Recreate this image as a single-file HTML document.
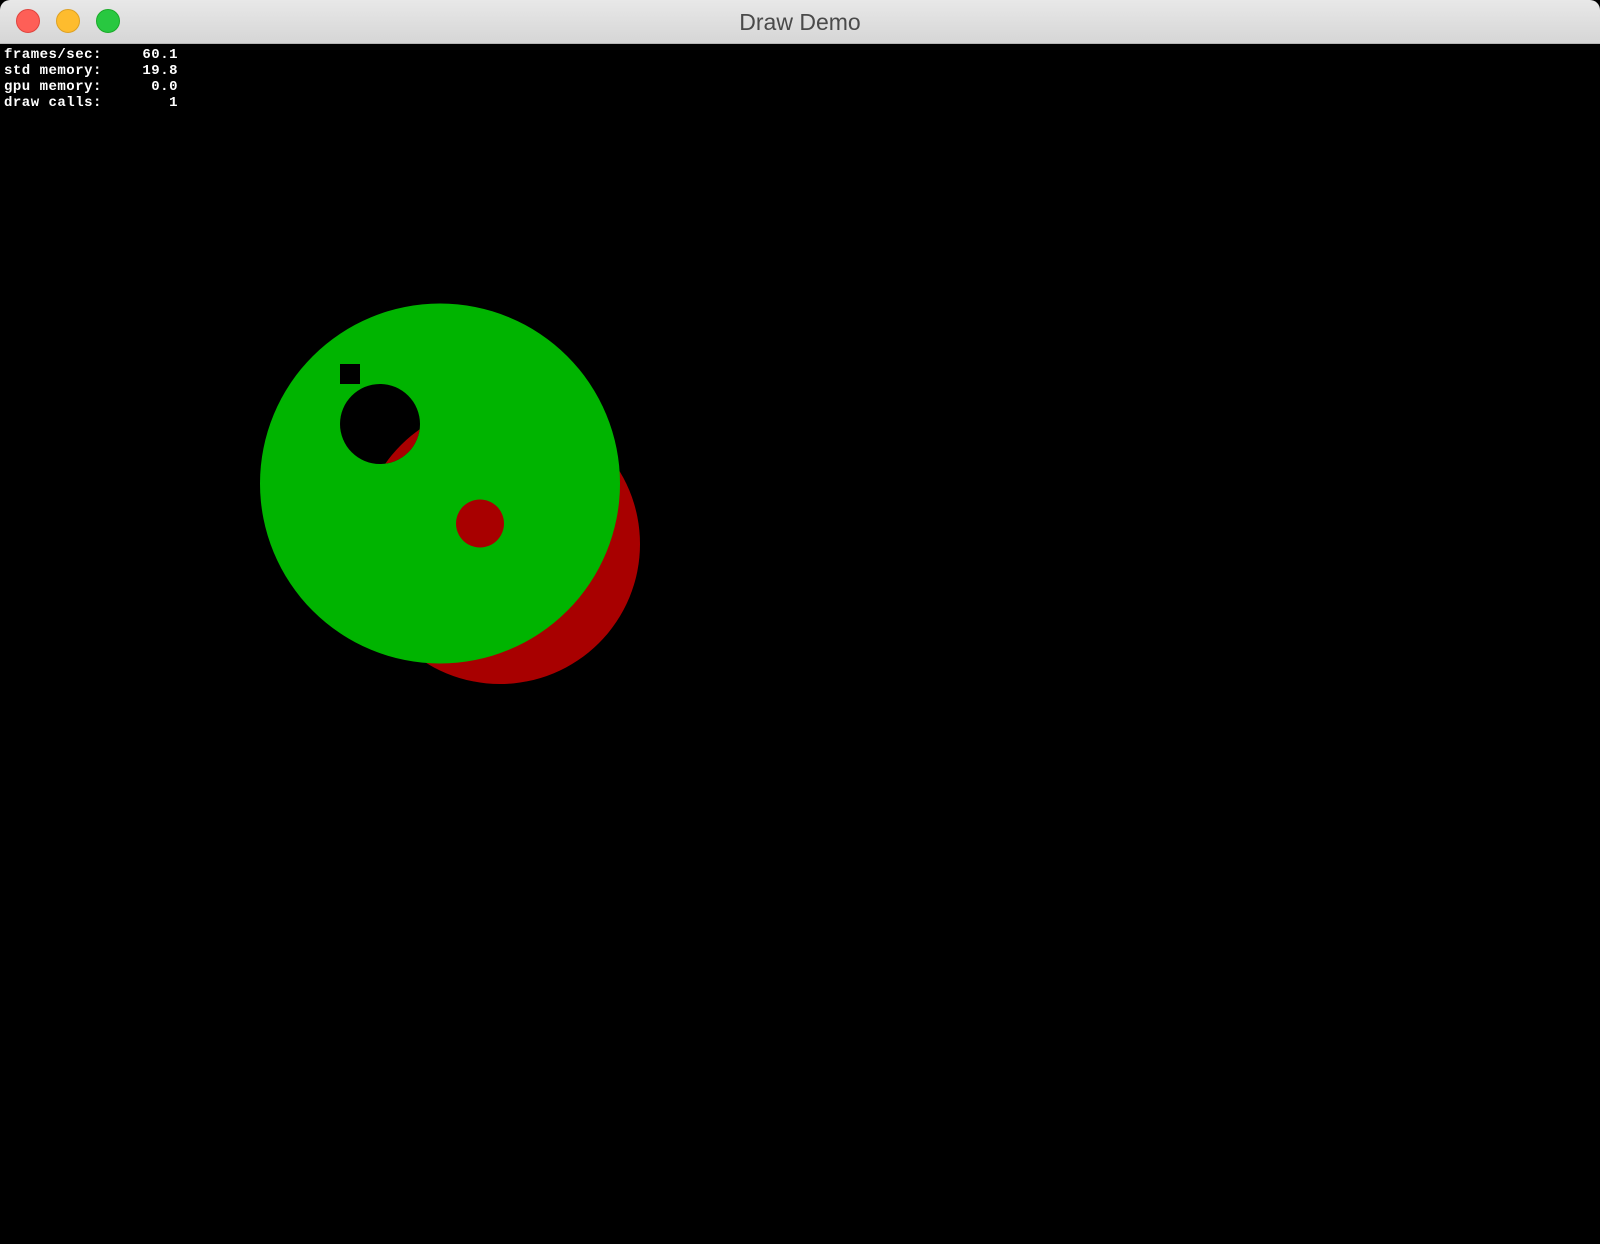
<!DOCTYPE html>
<html><head><meta charset="utf-8"><style>
html,body{margin:0;padding:0;width:1600px;height:1244px;overflow:hidden;background:#000;}
.bar{position:absolute;left:0;top:0;width:1600px;height:43px;background:linear-gradient(#e8e8e8,#d6d6d6);border-bottom:1px solid #b8b8b8;border-radius:10px 10px 0 0;}
.btn{position:absolute;top:9px;width:24px;height:24px;border-radius:50%;box-sizing:border-box;}
.title{position:absolute;left:0;width:1600px;top:9px;text-align:center;font:23px "Liberation Sans",sans-serif;color:#4a4a4a;}
.stats{position:absolute;left:4px;top:47px;font:bold 14px/16px "Liberation Mono",monospace;color:#fff;letter-spacing:0.5px;}
.row{position:relative;width:174px;height:16px;}
.row span{position:absolute;right:0;top:0;}
svg{position:absolute;left:0;top:0;}
</style></head><body>
<div class="bar">
<div class="btn" style="left:16px;background:#fe5f57;border:1px solid #e0443e"></div>
<div class="btn" style="left:56px;background:#febc2e;border:1px solid #dea123"></div>
<div class="btn" style="left:96px;background:#28c840;border:1px solid #1aab29"></div>
<div class="title">Draw Demo</div>
</div>
<div class="stats">
<div class="row">frames/sec:<span>60.1</span></div>
<div class="row">std memory:<span>19.8</span></div>
<div class="row">gpu memory:<span>0.0</span></div>
<div class="row">draw calls:<span>1</span></div>
</div>
<svg width="1600" height="1244">
<circle cx="500" cy="544" r="140" fill="#a80000"/>
<circle cx="440" cy="483.5" r="180" fill="#00b400"/>
<circle cx="380" cy="424" r="40" fill="#000"/>
<clipPath id="c"><circle cx="380" cy="424" r="40"/></clipPath>
<circle cx="500" cy="544" r="140" fill="#a80000" clip-path="url(#c)"/>
<rect x="340" y="364" width="20" height="20" fill="#000"/>
<circle cx="480" cy="523.5" r="24" fill="#a80000"/>
</svg>
</body></html>
